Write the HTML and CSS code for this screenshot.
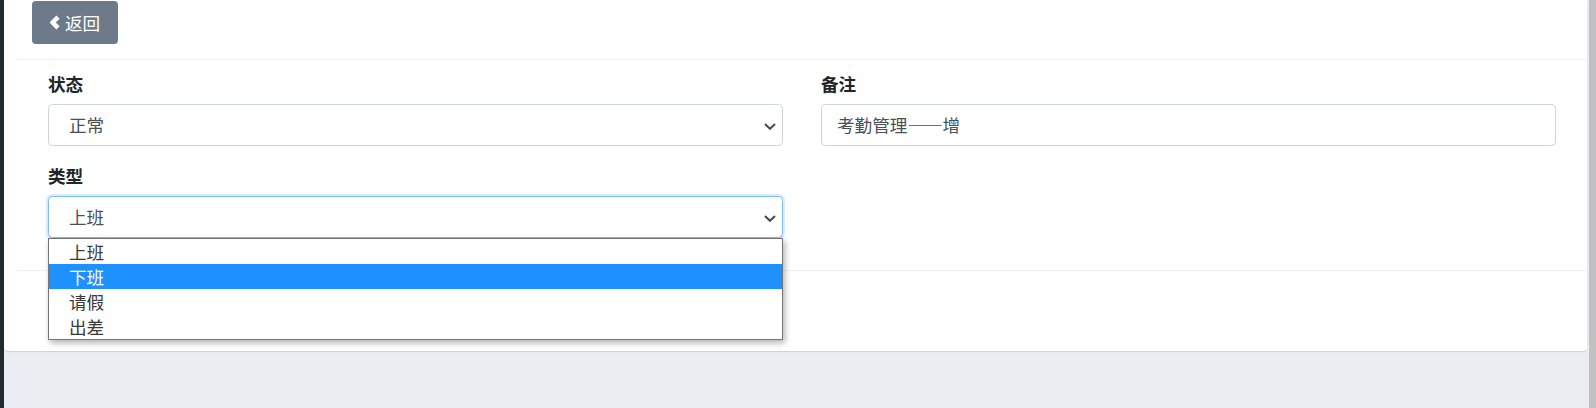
FILE: index.html
```html
<!DOCTYPE html>
<html lang="zh-CN">
<head>
<meta charset="utf-8">
<title>考勤管理</title>
<link rel="stylesheet" href="styles.css">
</head>
<body>
<div class="app">
  <div class="sidebar"></div>
  <div class="main">
    <div class="panel">
      <div class="card">
        <div class="card-header">
          <button class="btn-back" type="button">
            <svg class="chev-left" width="10" height="15" viewBox="0 0 10 15"><polygon points="6.4,0.5 9.6,3.7 5.8,7.5 9.6,11.3 6.4,14.5 -0.6,7.5" fill="#fff"/></svg>
            <span>返回</span>
          </button>
        </div>
        <div class="card-body">
          <div class="form-grid">
            <div class="form-group">
              <div class="label">状态</div>
              <div class="select">
                <span>正常</span>
                <svg class="chev-down" width="12" height="7" viewBox="0 0 12 7"><polyline points="1,1 6,5.8 11,1" fill="none" stroke="#444a50" stroke-width="2"/></svg>
              </div>
            </div>
            <div class="form-group">
              <div class="label">备注</div>
              <div class="input">考勤管理——增</div>
            </div>
            <div class="form-group">
              <div class="label">类型</div>
              <div class="select focused">
                <span>上班</span>
                <svg class="chev-down" width="12" height="7" viewBox="0 0 12 7"><polyline points="1,1 6,5.8 11,1" fill="none" stroke="#444a50" stroke-width="2"/></svg>
                <ul class="dropdown">
                  <li>上班</li>
                  <li class="active">下班</li>
                  <li>请假</li>
                  <li>出差</li>
                </ul>
              </div>
            </div>
          </div>
        </div>
        <div class="card-footer"></div>
      </div>
    </div>
  </div>
  <div class="scrollbar"><div class="thumb"></div></div>
</div>
</body>
</html>
```

FILE: styles.css
```css
* { box-sizing: border-box; }

html, body {
  margin: 0;
  padding: 0;
}

body {
  font-family: "Noto Sans CJK SC", "Noto Sans", sans-serif;
  background: #eaedf1;
  color: #212529;
  overflow: hidden;
}

.app {
  display: flex;
  height: 408px;
}

.sidebar {
  width: 4px;
  background: #1f2b31;
  flex: none;
}

.main {
  flex: 1;
  min-width: 0;
}

.scrollbar {
  width: 9px;
  flex: none;
  display: flex;
  justify-content: flex-end;
}

.scrollbar .thumb {
  width: 7px;
  background: #c1c1c1;
  height: 100%;
}

.panel {
  background: #fff;
  padding-left: 13px;
  border-radius: 0 0 4px 4px;
  box-shadow: 0 1px 1px rgba(0, 0, 0, 0.12);
}

.card-header {
  padding: 1px 15px 15px 15px;
  border-bottom: 1px solid #efefef;
}

.btn-back {
  display: flex;
  align-items: center;
  height: 43px;
  padding: 0 18px 0 18px;
  background: #6c7a89;
  border: none;
  border-radius: 4px;
  color: #fff;
  font-family: inherit;
  font-size: 17.6px;
  line-height: 1;
  gap: 5px;
}

.chev-left { display: block; }

.card-body {
  padding: 11px 31px 15px 31px;
}

.form-grid {
  display: grid;
  grid-template-columns: 1fr 1fr;
  column-gap: 38px;
}

.form-group {
  margin-bottom: 17px;
}

.label {
  font-size: 17.6px;
  font-weight: 700;
  line-height: 26px;
  margin-bottom: 7px;
  color: #212529;
}

.select, .input {
  position: relative;
  height: 42px;
  border: 1px solid #ced4da;
  border-radius: 4.4px;
  background: #fff;
  font-size: 17.6px;
  color: #495057;
  display: flex;
  align-items: center;
}

.select {
  padding-left: 20px;
}

.input {
  padding-left: 15px;
}

.select span, .input { line-height: 1; }

.chev-down {
  position: absolute;
  right: 6px;
  top: 18px;
}

.select.focused {
  border-color: #80bdff;
  box-shadow: 0 0 0 2px rgba(0, 123, 255, 0.15);
}

.dropdown {
  position: absolute;
  top: calc(100% + 1px);
  left: -1px;
  right: -1px;
  margin: 0;
  padding: 0;
  list-style: none;
  background: #fff;
  border: 1px solid #767676;
  box-shadow: 2px 3px 6px rgba(0, 0, 0, 0.3);
  z-index: 10;
}

.dropdown li {
  height: 25px;
  line-height: 25px;
  padding-left: 20px;
  font-size: 17.6px;
  color: #3a3a3a;
}

.dropdown li.active {
  background: #1e90ff;
  color: #fff;
}

.card-footer {
  height: 81px;
  border-top: 1px solid #efefef;
}
```
